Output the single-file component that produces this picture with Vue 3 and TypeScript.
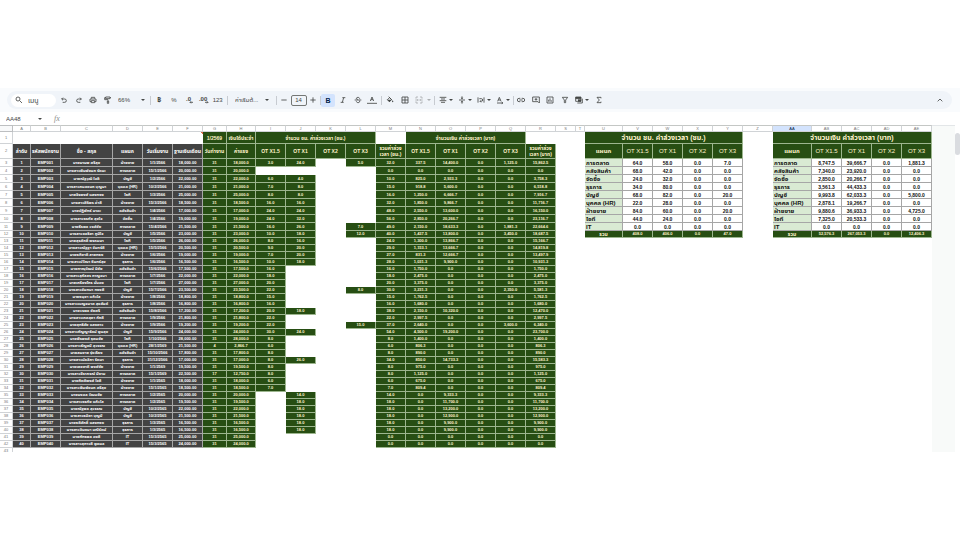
<script setup lang="ts">
import { ref } from 'vue'

interface Cell {
  text: string
  kind: string
  span?: number
}

interface Employee {
  name: string
  dept: string
  start: string
  salary: number
  ot: (number | null)[]
  days?: number
  income?: number
}

interface Icon {
  name: string
  label: string
  paths?: string[]
  fills?: string[]
  text?: string
}

const menuQuery = ref('')
const zoomLevel = ref('66%')
const fontName = ref('ค่าเริ่มต้...')
const fontSize = ref('14')
const cellRef = ref('AA48')

const none = [null, null, null]

const employees: Employee[] = [
  { name: 'นายมานพ ศรีสุข', dept: 'ฝ่ายขาย', start: '1/1/2566', salary: 18000, ot: [3, 24, 5] },
  { name: 'นางสาวพิมพ์ชนก รัตนะ', dept: 'การตลาด', start: '15/1/2566', salary: 20000, ot: none },
  { name: 'นายณัฐวุฒิ ใจดี', dept: 'บัญชี', start: '1/2/2566', salary: 22000, ot: [6, 4, null] },
  { name: 'นางสาวกมลชนก บุญมา', dept: 'บุคคล (HR)', start: '10/2/2566', salary: 21000, ot: [7, 8, null] },
  { name: 'นายจิรพงษ์ แสงทอง', dept: 'ไอที', start: '1/3/2566', salary: 25000, ot: [8, 8, null] },
  { name: 'นางสาวศิริพร คำดี', dept: 'ฝ่ายขาย', start: '15/3/2566', salary: 18500, ot: [16, 16, null] },
  { name: 'นายปฏิพัทธ์ นาคะ', dept: 'คลังสินค้า', start: '1/4/2566', salary: 17000, ot: [24, 24, null] },
  { name: 'นางสาวอรทัย สุขใจ', dept: 'จัดซื้อ', start: '1/4/2566', salary: 19000, ot: [24, 32, null] },
  { name: 'นายธีรพล วงศ์ชัย', dept: 'การตลาด', start: '15/4/2566', salary: 21500, ot: [16, 26, 7] },
  { name: 'นางสาวชลธิชา ภูมิใจ', dept: 'บัญชี', start: '1/5/2566', salary: 23000, ot: [10, 18, 12] },
  { name: 'นายสุรศักดิ์ พรหมมา', dept: 'ไอที', start: '1/5/2566', salary: 26000, ot: [8, 16, null] },
  { name: 'นางสาวณัฐฐา จันทร์ดี', dept: 'บุคคล (HR)', start: '15/5/2566', salary: 20500, ot: [9, 20, null] },
  { name: 'นายอภิชาติ สายทอง', dept: 'ฝ่ายขาย', start: '1/6/2566', salary: 19000, ot: [7, 20, null] },
  { name: 'นางสาวปวีณา อินทร์สุข', dept: 'ธุรการ', start: '1/6/2566', salary: 16500, ot: [10, 18, null] },
  { name: 'นายภาณุวัฒน์ มีชัย', dept: 'คลังสินค้า', start: '15/6/2566', salary: 17500, ot: [16, null, null] },
  { name: 'นางสาวสุภัสสร กาญจนา', dept: 'การตลาด', start: '1/7/2566', salary: 22000, ot: [18, null, null] },
  { name: 'นายเกรียงไกร มั่นคง', dept: 'ไอที', start: '1/7/2566', salary: 27000, ot: [20, null, null] },
  { name: 'นางสาวจันทนา ทองดี', dept: 'บัญชี', start: '15/7/2566', salary: 23500, ot: [22, null, 8] },
  { name: 'นายอนุชา แก้วใส', dept: 'ฝ่ายขาย', start: '1/8/2566', salary: 18800, ot: [15, null, null] },
  { name: 'นางสาวเบญจมาศ สุขสันต์', dept: 'ธุรการ', start: '1/8/2566', salary: 16800, ot: [16, null, null] },
  { name: 'นายวรพล ชัยศรี', dept: 'คลังสินค้า', start: '15/8/2566', salary: 17200, ot: [20, 18, null] },
  { name: 'นางสาวเกศสุดา ภักดี', dept: 'การตลาด', start: '1/9/2566', salary: 21800, ot: [22, null, null] },
  { name: 'นายสุทธิชัย แสงดาว', dept: 'ฝ่ายขาย', start: '1/9/2566', salary: 19200, ot: [22, null, 15] },
  { name: 'นางสาวกัญญารัตน์ พูนสุข', dept: 'บัญชี', start: '15/9/2566', salary: 24000, ot: [30, 24, null] },
  { name: 'นายพีรพงศ์ อุดมชัย', dept: 'ไอที', start: '1/10/2566', salary: 28000, ot: [8, null, null] },
  { name: 'นางสาวธัญชนี สุวรรณ', dept: 'บุคคล (HR)', start: '28/1/2569', salary: 21500, ot: [6, null, null], days: 4, income: 2866.7 },
  { name: 'นายสมชาย รุ่งเรือง', dept: 'คลังสินค้า', start: '15/10/2566', salary: 17800, ot: [8, null, null] },
  { name: 'นางสาวมัลลิกา รัตนา', dept: 'ธุรการ', start: '31/12/2566', salary: 17000, ot: [8, 26, null] },
  { name: 'นายเดชชาติ พงษ์ชัย', dept: 'ฝ่ายขาย', start: '1/1/2569', salary: 19500, ot: [8, null, null] },
  { name: 'นางสาวจีราภรณ์ มีงาม', dept: 'การตลาด', start: '15/1/2569', salary: 22500, ot: [8, null, null], days: 17, income: 12750 },
  { name: 'นายกิตติพงศ์ ใจดี', dept: 'ฝ่ายขาย', start: '1/1/2565', salary: 18000, ot: [6, null, null] },
  { name: 'นางสาวพิมพ์ชนก ศรีสุข', dept: 'ฝ่ายขาย', start: '15/1/2565', salary: 18500, ot: [7, null, null] },
  { name: 'นายมงคล วัฒนชัย', dept: 'การตลาด', start: '1/2/2565', salary: 20000, ot: [null, 14, null] },
  { name: 'นางสาวอรทัย แก้วใส', dept: 'การตลาด', start: '1/2/2565', salary: 19500, ot: [null, 18, null] },
  { name: 'นายณัฐพล สุวรรณ', dept: 'บัญชี', start: '10/2/2565', salary: 22000, ot: [null, 18, null] },
  { name: 'นางสาวธนิดา บุญมี', dept: 'บัญชี', start: '10/2/2565', salary: 21500, ot: [null, 18, null] },
  { name: 'นายอดิศักดิ์ แสงทอง', dept: 'ธุรการ', start: '1/3/2565', salary: 16500, ot: [null, 18, null] },
  { name: 'นางสาวจินตนา มณีรัตน์', dept: 'ธุรการ', start: '1/3/2565', salary: 16500, ot: [null, 18, null] },
  { name: 'นายภัทรพล คงดี', dept: 'IT', start: '15/3/2565', salary: 25000, ot: none },
  { name: 'นางสาวสุภาวดี พูลผล', dept: 'IT', start: '15/3/2565', salary: 24000, ot: none },
]

const departments: { name: string; hours: number[]; pay: number[] }[] = [
  { name: 'การตลาด', hours: [64, 58, 0, 7], pay: [8747.5, 39666.7, 0, 1881.3] },
  { name: 'คลังสินค้า', hours: [68, 42, 0, 0], pay: [7340, 23920, 0, 0] },
  { name: 'จัดซื้อ', hours: [24, 32, 0, 0], pay: [2850, 20266.7, 0, 0] },
  { name: 'ธุรการ', hours: [34, 80, 0, 0], pay: [3561.3, 44433.3, 0, 0] },
  { name: 'บัญชี', hours: [68, 82, 0, 20], pay: [9993.8, 62033.3, 0, 5800] },
  { name: 'บุคคล (HR)', hours: [22, 28, 0, 0], pay: [2878.1, 19266.7, 0, 0] },
  { name: 'ฝ่ายขาย', hours: [84, 60, 0, 20], pay: [9880.6, 36933.3, 0, 4725] },
  { name: 'ไอที', hours: [44, 24, 0, 0], pay: [7325, 20533.3, 0, 0] },
  { name: 'IT', hours: [0, 0, 0, 0], pay: [0, 0, 0, 0] },
]
const totals = { hours: [408, 406, 0, 47], pay: [52576.3, 267053.3, 0, 12406.3] }

const letters = [
  'A', 'B', 'C', 'D', 'E', 'F', 'G', 'H', 'I', 'J', 'K', 'L', 'M', 'N', 'O', 'P', 'Q', 'R', 'S', 'T',
  'U', 'V', 'W', 'X', 'Y', 'Z', 'AA', 'AB', 'AC', 'AD', 'AE',
]
const widths = [
  18, 30, 52, 30, 30, 30, 24, 29, 30, 30, 30, 30, 30, 30, 30, 30, 30, 30, 20, 9,
  38, 30, 30, 30, 30, 30, 39, 30, 30, 30, 30,
]

function num(value: number, digits = 1): string {
  const [whole, fraction] = (Math.round(value * 10 + 1e-6) / 10).toFixed(digits).split('.')
  return whole.replace(/\B(?=(\d{3})+$)/g, ',') + '.' + fraction
}

const blank = (span = 1): Cell => ({ text: '', kind: 'blank', span })
const cells = (kind: string, texts: string[]): Cell[] => texts.map((text) => ({ text, kind }))

function summary(index: number, key: 'hours' | 'pay'): Cell[] {
  if (index < departments.length) {
    const d = departments[index]
    return [{ text: d.name, kind: 'dept' }, ...cells('sum', d[key].map((v) => num(v)))]
  }
  if (index === departments.length) {
    return [{ text: 'รวม', kind: 'green total' }, ...cells('green', totals[key].map((v) => num(v)))]
  }
  return [blank(5)]
}

const otTitles = ['OT X1.5', 'OT X1', 'OT X2', 'OT X3']

const titleRow: Cell[] = [
  { text: '', kind: 'blank note', span: 6 },
  ...cells('green head', ['1/2569', 'เงินได้ประจำ']),
  { text: 'จำนวน ชม. ค่าล่วงเวลา (ชม.)', kind: 'green head', span: 4 },
  blank(),
  { text: 'จำนวนเงิน ค่าล่วงเวลา (บาท)', kind: 'green head', span: 4 },
  blank(3),
  { text: 'จำนวน ชม. ค่าล่วงเวลา (ชม.)', kind: 'green title', span: 5 },
  blank(),
  { text: 'จำนวนเงิน ค่าล่วงเวลา (บาท)', kind: 'green title', span: 5 },
]

const headRow: Cell[] = [
  ...cells('dark head', ['ลำดับ', 'รหัสพนักงาน', 'ชื่อ - สกุล', 'แผนก', 'วันเริ่มงาน', 'ฐานเงินเดือน']),
  ...cells('green head', ['วันทำงาน', 'ค่าแรง']),
  ...cells('green ot', otTitles),
  { text: 'รวมค่าล่วง\nเวลา (ชม.)', kind: 'green head' },
  ...cells('green ot', otTitles),
  { text: 'รวมค่าล่วง\nเวลา (บาท)', kind: 'green head' },
  blank(2),
  { text: 'แผนก', kind: 'green wide strong' },
  ...cells('green wide', otTitles),
  blank(),
  { text: 'แผนก', kind: 'green wide strong' },
  ...cells('green wide', otTitles),
]

function employeeRow(e: Employee, i: number): Cell[] {
  const [a, b, c] = e.ot
  const hourly = e.salary / 240
  const payA = hourly * 1.5 * (a ?? 0)
  const payB = (e.salary / 30) * (b ?? 0)
  const payC = hourly * 3 * (c ?? 0)
  const hour = (v: number | null): Cell => (v === null ? blank() : { text: num(v), kind: 'green' })
  return [
    ...cells('dark', [
      String(i + 1),
      'EMP' + String(i + 1).padStart(3, '0'),
      e.name,
      e.dept,
      e.start,
      num(e.salary, 2),
    ]),
    ...cells('green', [String(e.days ?? 31), num(e.income ?? e.salary)]),
    hour(a),
    hour(b),
    blank(),
    hour(c),
    ...cells('green', [
      num((a ?? 0) + (b ?? 0) + (c ?? 0)),
      num(payA),
      num(payB),
      num(0),
      num(payC),
      num(payA + payB + payC),
    ]),
    blank(2),
    ...summary(i, 'hours'),
    blank(),
    ...summary(i, 'pay'),
  ]
}

const rows = employees.map(employeeRow)

const history: Icon[] = [
  { name: 'undo', label: 'เลิกทำ', paths: ['M9 5 5 9l4 4', 'M5 9h9a5 5 0 0 1 0 10H8'] },
  { name: 'redo', label: 'ทำซ้ำ', paths: ['M15 5l4 4-4 4', 'M19 9h-9a5 5 0 0 0 0 10h6'] },
  { name: 'print', label: 'พิมพ์', paths: ['M7 8V4h10v4', 'M7 17H3V9h18v8h-4', 'M7 14h10v6H7z'] },
  { name: 'paint', label: 'คัดลอกรูปแบบ', paths: ['M5 3h13v5H5z', 'M5 5H2v6h10v3', 'M10 15h4v7h-4z', 'M18 5h3'] },
]
const formats: Icon[] = [
  { name: 'baht', label: 'สกุลเงิน', text: '฿' },
  { name: 'percent', label: 'เปอร์เซ็นต์', text: '%' },
  { name: 'less', label: 'ลดทศนิยม', text: '.0', paths: ['M21 19h-9', 'M15 16l-3 3 3 3'] },
  { name: 'more', label: 'เพิ่มทศนิยม', text: '.00', paths: ['M12 19h9', 'M18 16l3 3-3 3'] },
  { name: 'n123', label: 'รูปแบบเพิ่มเติม', text: '123' },
]
const styles: Icon[] = [
  { name: 'bold', label: 'ตัวหนา', text: 'B' },
  { name: 'italic', label: 'ตัวเอียง', paths: ['M10 5h9', 'M5 19h9', 'M14 5l-4 14'] },
  { name: 'strike', label: 'ขีดทับ', paths: ['M2 12h20', 'M17 8c0-5-10-5-10-1 0 2 2 3 5 3', 'M7 16c0 5 10 5 10 1 0-2-1-3-2-3'] },
  { name: 'color', label: 'สีข้อความ', paths: ['M7 15 12 3l5 12', 'M9 11h6', 'M-3 22h30'] },
]
const fills: Icon[] = [
  { name: 'fill', label: 'สีเติม', paths: ['M8 2l9 9', 'M11 5l-7 6 6 6 7-6z'], fills: ['M4 11h13l-7 7z', 'M20 13c3 4 2 6 0 6s-3-2 0-6z'] },
  { name: 'borders', label: 'เส้นขอบ', paths: ['M3 3h18v18H3z', 'M12 3v18', 'M3 12h18'] },
]
const aligns: Icon[] = [
  { name: 'align', label: 'จัดแนวนอน', paths: ['M2 4h20', 'M6 9h12', 'M2 14h20', 'M6 19h12'] },
  { name: 'valign', label: 'จัดแนวตั้ง', paths: ['M3 12h18', 'M12 1v7', 'M12 16v7'], fills: ['M8 5h8l-4 5z', 'M8 19h8l-4-5z'] },
  { name: 'wrap', label: 'ตัดข้อความ', paths: ['M3 4v16', 'M21 4v16', 'M7 8h6a4 4 0 0 1 0 8H9', 'M12 13l-3 3 3 3'] },
  { name: 'rotate', label: 'หมุนข้อความ', paths: ['M5 16 10 4l5 12', 'M7 12h6', 'M3 21h17', 'M17 18l4 3-4 2'] },
]
const inserts: Icon[] = [
  { name: 'link', label: 'แทรกลิงก์', paths: ['M10 7H6a5 5 0 0 0 0 10h4', 'M14 7h4a5 5 0 0 1 0 10h-4', 'M7 12h10'] },
  { name: 'comment', label: 'แทรกความคิดเห็น', paths: ['M2 3h20v18l-4-4H2z', 'M12 6v8', 'M8 10h8'] },
  { name: 'chart', label: 'แทรกแผนภูมิ', paths: ['M3 3h18v18H3z', 'M8 17v-6', 'M12 17V7', 'M16 17v-4'] },
  { name: 'filter', label: 'ตัวกรอง', paths: ['M4 4h16l-6 8v8h-4v-8z'] },
]
const views: Icon = {
  name: 'views',
  label: 'มุมมองตาราง',
  paths: ['M2 3h16v13H2z', 'M2 8h16', 'M7 21h15V8'],
  fills: ['M2 3h16v5H2z', 'M9 10h9v7H9z'],
}
const groups = [history, formats]
</script>

<template>
  <main class="app">
    <header class="top">
      <div class="toolbar" role="toolbar" aria-label="แถบเครื่องมือ">
        <label class="search">
          <svg class="icon" viewBox="0 0 24 24"><circle cx="9" cy="9" r="6" /><path d="M14 14l7 7" /></svg>
          <input v-model="menuQuery" type="text" placeholder="เมนู" aria-label="เมนู" />
        </label>
        <div class="group four">
          <button v-for="i in groups[0]" :key="i.name" type="button" :aria-label="i.label">
            <svg class="icon" viewBox="0 0 24 24"><path v-for="p in i.paths" :key="p" :d="p" /></svg>
          </button>
        </div>
        <label class="picker zoom">
          <select v-model="zoomLevel" aria-label="ซูม"><option>66%</option></select>
          <svg class="caret" viewBox="0 0 8 4"><path d="M0 0h8L4 4z" /></svg>
        </label>
        <i class="rule"></i>
        <div class="group five">
          <button v-for="i in groups[1]" :key="i.name" type="button" :aria-label="i.label" :class="i.name">
            <span>{{ i.text }}</span>
            <svg v-if="i.paths" class="icon over" viewBox="0 0 24 24"><path v-for="p in i.paths" :key="p" :d="p" /></svg>
          </button>
        </div>
        <i class="rule"></i>
        <label class="picker font">
          <select v-model="fontName" aria-label="แบบอักษร"><option>ค่าเริ่มต้...</option></select>
          <svg class="caret" viewBox="0 0 8 4"><path d="M0 0h8L4 4z" /></svg>
        </label>
        <i class="rule"></i>
        <div class="size">
          <button type="button" aria-label="ลดขนาด"><svg class="icon" viewBox="0 0 24 24"><path d="M4 12h16" /></svg></button>
          <input v-model="fontSize" type="text" aria-label="ขนาดอักษร" />
          <button type="button" aria-label="เพิ่มขนาด"><svg class="icon" viewBox="0 0 24 24"><path d="M4 12h16M12 4v16" /></svg></button>
        </div>
        <i class="rule"></i>
        <div class="group four">
          <button v-for="i in styles" :key="i.name" type="button" :aria-label="i.label" :class="i.name">
            <span v-if="i.text">{{ i.text }}</span>
            <svg v-else class="icon" viewBox="0 0 24 24"><path v-for="p in i.paths" :key="p" :d="p" /></svg>
          </button>
        </div>
        <i class="rule gap"></i>
        <div class="group fill-group">
          <button v-for="i in fills" :key="i.name" type="button" :aria-label="i.label">
            <svg class="icon" viewBox="0 0 24 24">
              <path v-for="p in i.paths" :key="p" :d="p" />
              <path v-for="p in i.fills" :key="p" :d="p" class="solid" />
            </svg>
          </button>
          <button type="button" class="merge" aria-label="ผสานเซลล์" disabled>
            <svg class="icon" viewBox="0 0 24 24"><path d="M9 3H3v5M15 3h6v5M9 21H3v-5M15 21h6v-5M1 12h8M23 12h-8M7 9l3 3-3 3M17 9l-3 3 3 3" /></svg>
            <svg class="caret" viewBox="0 0 8 4"><path d="M0 0h8L4 4z" /></svg>
          </button>
        </div>
        <i class="rule"></i>
        <div class="group aligns">
          <button v-for="i in aligns" :key="i.name" type="button" :aria-label="i.label">
            <svg class="icon" viewBox="0 0 24 24">
              <path v-for="p in i.paths" :key="p" :d="p" />
              <path v-for="p in i.fills" :key="p" :d="p" class="solid" />
            </svg>
            <svg class="caret" viewBox="0 0 8 4"><path d="M0 0h8L4 4z" /></svg>
          </button>
        </div>
        <i class="rule"></i>
        <div class="group four">
          <button v-for="i in inserts" :key="i.name" type="button" :aria-label="i.label">
            <svg class="icon" viewBox="0 0 24 24"><path v-for="p in i.paths" :key="p" :d="p" /></svg>
          </button>
        </div>
        <div class="group last">
          <button type="button" :aria-label="views.label">
            <svg class="icon" viewBox="0 0 24 24">
              <path v-for="p in views.paths" :key="p" :d="p" />
              <path v-for="p in views.fills" :key="p" :d="p" class="solid" />
            </svg>
            <svg class="caret" viewBox="0 0 8 4"><path d="M0 0h8L4 4z" /></svg>
          </button>
          <button type="button" aria-label="ฟังก์ชัน">
            <svg class="icon" viewBox="0 0 24 24"><path d="M18 7V4H6l7 8-7 8h12v-3" /></svg>
          </button>
        </div>
        <button type="button" class="collapse" aria-label="ซ่อนเมนู">
          <svg class="icon" viewBox="0 0 24 24"><path d="M5 16l7-7 7 7" /></svg>
        </button>
      </div>
    </header>

    <div class="formula">
      <label class="picker namebox">
        <input v-model="cellRef" type="text" aria-label="ช่องชื่อ" />
        <svg class="caret" viewBox="0 0 8 4"><path d="M0 0h8L4 4z" /></svg>
      </label>
      <span class="fx">fx</span>
    </div>

    <div class="sheet">
      <table>
        <colgroup>
          <col class="index" />
          <col v-for="(w, i) in widths" :key="i" :style="{ width: w + 'px' }" />
        </colgroup>
        <thead>
          <tr class="letters">
            <th class="corner"></th>
            <th v-for="l in letters" :key="l" scope="col" :class="{ selected: l === 'AA' }"><div>{{ l }}</div></th>
          </tr>
        </thead>
        <tbody>
          <tr class="row-title">
            <th scope="row"><div>1</div></th>
            <td v-for="(c, i) in titleRow" :key="i" :class="c.kind" :colspan="c.span"><div>{{ c.text }}</div></td>
          </tr>
          <tr class="row-head">
            <th scope="row"><div>2</div></th>
            <td v-for="(c, i) in headRow" :key="i" :class="c.kind" :colspan="c.span"><div>{{ c.text }}</div></td>
          </tr>
          <tr v-for="(row, r) in rows" :key="r" :class="{ tall: r < 9 }">
            <th scope="row"><div>{{ r + 3 }}</div></th>
            <td v-for="(c, i) in row" :key="i" :class="c.kind" :colspan="c.span"><div>{{ c.text }}</div></td>
          </tr>
          <tr>
            <th scope="row"><div>43</div></th>
            <td class="blank" colspan="31"></td>
          </tr>
        </tbody>
      </table>
      <div class="beyond"></div>
      <div class="scroll"><div class="thumb"></div></div>
    </div>
  </main>
</template>

<style>
body {
  margin: 0;
  background: #fff;
}
</style>

<style scoped>
.app {
  min-height: 100vh;
  display: flex;
  flex-direction: column;
  justify-content: center;
  overflow: hidden;
  background: #fff;
  color: #444746;
  font-family: "Liberation Sans", "Noto Sans Thai", "Noto Sans", sans-serif;
  font-size: 6px;
}
button,
input,
select {
  margin: 0;
  padding: 0;
  border: 0;
  background: none;
  color: inherit;
  font: inherit;
  appearance: none;
  outline: none;
}
.top {
  padding: 3px 8px 3px 7px;
  background: #f9fbfd;
}
.toolbar {
  display: flex;
  align-items: center;
  height: 18px;
  padding: 0 5px 0 4px;
  border-radius: 9px;
  background: #f0f4f9;
}
.icon {
  flex: none;
  width: 8px;
  height: 8px;
  fill: none;
  overflow: visible;
  stroke: #444746;
  stroke-width: 2.5;
}
.icon .solid {
  fill: #444746;
  stroke: none;
}
.caret {
  flex: none;
  width: 4px;
  height: 2px;
  fill: #444746;
}
.search {
  display: flex;
  align-items: center;
  gap: 5px;
  width: 41px;
  height: 13px;
  margin-right: 1px;
  padding-left: 4px;
  border-radius: 7px;
  background: #fff;
}
.search input {
  width: 24px;
  height: 12px;
  font-size: 7px;
}
.search input::placeholder {
  color: #444746;
  opacity: 1;
}
.group {
  display: flex;
  align-items: center;
}
.group button {
  position: relative;
  flex: 1;
  display: flex;
  align-items: center;
  justify-content: center;
  height: 14px;
}
.four {
  width: 58px;
}
.five {
  width: 73px;
  margin: 0 2px 0 1px;
}
.five .baht {
  font-size: 7px;
  font-weight: 700;
}
.less span,
.more span {
  padding-bottom: 3px;
  font-weight: 700;
}
.over {
  position: absolute;
  left: 5px;
  top: 3px;
}
.rule {
  flex: none;
  width: 1px;
  height: 9px;
  background: #c7cbd1;
}
.gap {
  margin-left: 2px;
}
.picker {
  display: flex;
  align-items: center;
  justify-content: space-between;
}
.picker select,
.picker input {
  flex: 1;
  min-width: 0;
  height: 12px;
}
.zoom {
  width: 27px;
  padding: 0 5px 0 3px;
}
.font {
  width: 34px;
  padding: 0 7px;
}
.size {
  display: flex;
  align-items: center;
  width: 43px;
}
.size button {
  flex: 1;
  display: flex;
  justify-content: center;
}
.size input {
  width: 14px;
  height: 9px;
  border: 1px solid #747775;
  border-radius: 2px;
  text-align: center;
}
.group .bold {
  height: 13px;
  margin-right: 1px;
  border-radius: 2px;
  background: #d3e3fd;
  color: #041e49;
  font-size: 7px;
  font-weight: 700;
}
.fill-group {
  width: 51px;
  margin-right: 1px;
}
.fill-group .merge {
  flex: none;
  width: 21px;
  gap: 4px;
  opacity: 0.4;
}
.aligns {
  width: 76px;
  margin: 0 1px;
}
.aligns button,
.last button:first-child {
  gap: 2px;
}
.last {
  width: 34px;
  margin-left: 1px;
}
.collapse {
  display: flex;
  margin-left: auto;
  padding-right: 3px;
}
.formula {
  display: flex;
  align-items: center;
  height: 13px;
  padding-left: 6px;
}
.namebox {
  width: 36px;
}
.fx {
  padding-left: 12px;
  color: #8a8d8c;
  font-family: "Liberation Serif", serif;
  font-size: 8px;
  font-style: italic;
}
.sheet {
  display: flex;
  height: 327px;
  overflow: hidden;
}
table {
  flex: none;
  width: 932px;
  align-self: flex-start;
  table-layout: fixed;
  border-spacing: 0;
  font-size: 4px;
  line-height: 6px;
}
.index {
  width: 13px;
}
th,
td {
  box-sizing: border-box;
  height: 7px;
  padding: 0;
  border: 0 solid #a6a6a6;
  border-width: 0 1px 1px 0;
  text-align: center;
  vertical-align: middle;
  font-weight: 700;
}
th > div,
td > div {
  display: flex;
  justify-content: center;
  height: 6px;
  overflow-x: clip;
  white-space: pre;
}
th {
  border-color: #d0d3d6;
  color: #777;
  font-weight: 400;
}
.letters th > div {
  height: 5px;
  line-height: 5px;
}
.letters th {
  border-top: 1px solid #c4c7c5;
}
.letters .corner {
  border-color: #bdbfc1;
  background: #f8f9fa;
}
.letters .selected {
  background: #d3e3fd;
  color: #041e49;
}
.tall > * {
  height: 8px;
}
.row-title > * {
  height: 12px;
}
.row-head > * {
  height: 15px;
}
.blank {
  border: 0;
}
.note {
  background: linear-gradient(225deg, #d9684b 2px, transparent 2px);
}
.dark {
  background: #434343;
  color: #fff;
}
.green {
  border-color: #9db68f;
  background: #274e13;
  color: #fff2cc;
}
.head,
.ot,
.sum,
.total {
  font-size: 5px;
}
.row-head .head > div {
  height: auto;
}
.title {
  font-size: 7px;
}
.title > div {
  height: 8px;
  line-height: 8px;
}
.wide {
  font-size: 6px;
  font-weight: 400;
}
.strong {
  font-weight: 700;
}
.dept {
  background: #d9ead3;
  color: #111;
  font-size: 6px;
}
.dept > div {
  justify-content: flex-start;
  padding-left: 1px;
}
.sum {
  color: #111;
}
.beyond {
  flex: 1;
  border-top: 1px solid #e3e6e8;
  background: #f8faf9;
}
.scroll {
  width: 5px;
  padding-top: 8px;
  background: #fff;
}
.thumb {
  height: 22px;
  border-radius: 3px;
  background: #dadce0;
}
</style>
